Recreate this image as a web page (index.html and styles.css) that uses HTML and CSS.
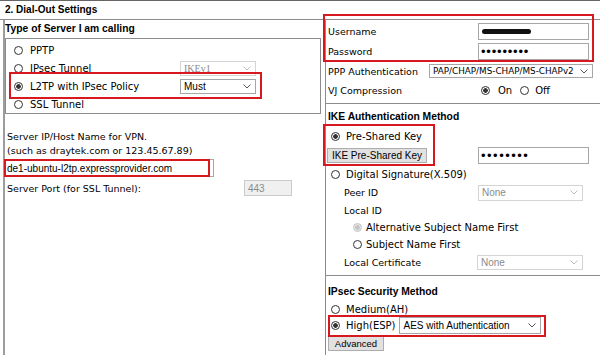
FILE: index.html
```html
<!DOCTYPE html>
<html lang="en">
<head>
  <meta charset="UTF-8">
  <meta name="viewport" content="width=device-width, initial-scale=1.0">
  <title>Dial-Out Settings</title>
  <link rel="stylesheet" href="styles.css">
</head>
<body>
<div class="page">
  <div class="title">2. Dial-Out Settings</div>

  <div class="columns">
    <div class="col-left">
      <div class="head">Type of Server I am calling</div>
      <div class="server-box">
        <div class="opt">
          <input type="radio" class="radio" name="srv">
          <span class="opt-label">PPTP</span>
        </div>
        <div class="opt">
          <input type="radio" class="radio" name="srv">
          <span class="opt-label">IPsec Tunnel</span>
          <span class="select off serif w76">IKEv1<svg viewBox="0 0 8 5"><path d="M0.5 0.5 L4 4 L7.5 0.5"/></svg></span>
        </div>
        <div class="opt">
          <input type="radio" class="radio" name="srv" checked>
          <span class="opt-label">L2TP with IPsec Policy</span>
          <span class="select w76">Must<svg viewBox="0 0 8 5"><path d="M0.5 0.5 L4 4 L7.5 0.5"/></svg></span>
        </div>
        <div class="opt">
          <input type="radio" class="radio" name="srv">
          <span class="opt-label">SSL Tunnel</span>
        </div>
      </div>

      <div class="host">
        <p>Server IP/Host Name for VPN.<br>(such as draytek.com or 123.45.67.89)</p>
        <div class="field host-field">de1-ubuntu-l2tp.expressprovider.com</div>
        <div class="port-row">
          <span class="port-label">Server Port (for SSL Tunnel):</span>
          <span class="field port off">443</span>
        </div>
      </div>
    </div>

    <div class="col-right">
      <div class="section account">
        <div class="row">
          <span class="lbl">Username</span>
          <span class="field user"><span class="redact"></span></span>
        </div>
        <div class="row">
          <span class="lbl">Password</span>
          <span class="field user"><span class="dots">•••••••••</span></span>
        </div>
        <div class="row">
          <span class="lbl ppp-lbl">PPP Authentication</span>
          <span class="select ppp">PAP/CHAP/MS-CHAP/MS-CHAPv2<svg viewBox="0 0 8 5"><path d="M0.5 0.5 L4 4 L7.5 0.5"/></svg></span>
        </div>
        <div class="row vj">
          <span class="lbl vj-lbl">VJ Compression</span>
          <input type="radio" class="radio" name="vj" checked>
          <span class="vj-on">On</span>
          <input type="radio" class="radio" name="vj">
          <span class="vj-off">Off</span>
        </div>
      </div>

      <div class="section ike">
        <div class="head">IKE Authentication Method</div>
        <div class="row h20 choice">
          <input type="radio" class="radio" name="ike" checked>
          <span>Pre-Shared Key</span>
        </div>
        <div class="row h19">
          <span class="lbl"><button class="btn psk-btn">IKE Pre-Shared Key</button></span>
          <span class="field user"><span class="dots wide">••••••••</span></span>
        </div>
        <div class="row h19 choice">
          <input type="radio" class="radio" name="ike">
          <span>Digital Signature(X.509)</span>
        </div>
        <div class="row h17 sub">
          <span class="lbl sub-lbl">Peer ID</span>
          <span class="select off w105">None<svg viewBox="0 0 8 5"><path d="M0.5 0.5 L4 4 L7.5 0.5"/></svg></span>
        </div>
        <div class="row h18 sub">Local ID</div>
        <div class="row h16 subsub">
          <input type="radio" class="radio dis" name="lid" checked disabled>
          <span>Alternative Subject Name First</span>
        </div>
        <div class="row h18 subsub">
          <input type="radio" class="radio" name="lid">
          <span>Subject Name First</span>
        </div>
        <div class="row h18 sub">
          <span class="lbl cert-lbl">Local Certificate</span>
          <span class="select off w106">None<svg viewBox="0 0 8 5"><path d="M0.5 0.5 L4 4 L7.5 0.5"/></svg></span>
        </div>
      </div>

      <div class="section ipsec">
        <div class="head">IPsec Security Method</div>
        <div class="row h16 choice">
          <input type="radio" class="radio" name="sec">
          <span>Medium(AH)</span>
        </div>
        <div class="row h17 choice">
          <input type="radio" class="radio" name="sec" checked>
          <span>High(ESP)</span>
          <span class="select esp">AES with Authentication<svg viewBox="0 0 8 5"><path d="M0.5 0.5 L4 4 L7.5 0.5"/></svg></span>
        </div>
        <div class="adv-row"><button class="btn adv">Advanced</button></div>
      </div>
    </div>
  </div>

  <!-- red highlight frames drawn over the form -->
  <div class="mark mark-l2tp"></div>
  <div class="mark mark-host"></div>
  <div class="mark mark-account"></div>
  <div class="mark mark-psk"></div>
  <div class="mark mark-esp"></div>
</div>
</body>
</html>
```

FILE: styles.css
```css
body {
  margin: 0;
  font-family: "DejaVu Sans", Verdana, sans-serif;
  font-size: 9.5px;
  color: #000;
  background: #fff;
}
.page {
  position: relative;
  width: 600px;
  height: 355px;
  overflow: hidden;
}
.title {
  height: 18px;
  line-height: 18px;
  padding-left: 5px;
  border-top: 1px solid #666;
  border-bottom: 1px solid #8c8c8c;
  font-family: "Liberation Sans", Arial, sans-serif;
  font-weight: bold;
  font-size: 10px;
}
.head {
  height: 18px;
  line-height: 18px;
  font-family: "Liberation Sans", Arial, sans-serif;
  font-weight: bold;
  font-size: 10.3px;
}
.columns {
  display: flex;
  height: 335px;
}
.col-left {
  width: 320px;
  margin-left: 3px;
  border-left: 2px solid #9d9d9d;
}
.col-right {
  flex: 1;
  border-left: 1px solid #8c8c8c;
}

/* radios */
.radio {
  appearance: none;
  box-sizing: border-box;
  width: 9px;
  height: 9px;
  margin: 0;
  border: 1px solid #333;
  border-radius: 50%;
  background: #fff;
  flex: none;
}
.radio:checked {
  background: radial-gradient(circle, #333 0 2px, #fff 2.6px);
}
.radio.dis {
  border-color: #c4c4c4;
  background: radial-gradient(circle, #c4c4c4 0 2px, #e6e6e6 2.6px);
}

/* selects and fields */
.select {
  display: flex;
  align-items: center;
  justify-content: space-between;
  box-sizing: border-box;
  height: 15px;
  padding: 0 4px 0 3px;
  border: 1px solid #a6a6a6;
  background: #fff;
  font-family: "Liberation Sans", Arial, sans-serif;
  font-size: 10px;
  color: #000;
}
.select svg {
  width: 8px;
  height: 5px;
  flex: none;
  fill: none;
  stroke: #555;
  stroke-width: 1;
}
.select.off {
  color: #8a8a8a;
  border-color: #d4d4d4;
}
.select.off svg {
  stroke: #bdbdbd;
}
.select.serif {
  font-family: "Liberation Serif", "Times New Roman", serif;
}
.w76 { width: 76px; }
.w105 { width: 105px; height: 16px; }
.w106 { width: 106px; }

.field {
  display: flex;
  align-items: center;
  box-sizing: border-box;
  height: 18px;
  padding-left: 1px;
  border: 1px solid #a6a6a6;
  background: #fff;
  font-family: "Liberation Sans", Arial, sans-serif;
  font-size: 10px;
}
.field.off {
  background: #f0f0f0;
  border-color: #cacaca;
  color: #8a8a8a;
}

/* left column */
.server-box {
  margin-right: 4px;
  padding-top: 2px;
  border: 1px solid #8c8c8c;
}
.opt {
  display: flex;
  align-items: center;
  height: 18px;
  padding-left: 8px;
  font-size: 10px;
}
.opt .radio {
  margin-right: 7px;
}
.opt-label {
  width: 150px;
}
.host p {
  margin: 16px 0 0;
  padding-left: 2px;
  line-height: 14px;
}
.host-field {
  width: 209px;
  margin-top: 1px;
}
.port-row {
  display: flex;
  align-items: center;
  height: 18px;
  margin-top: 2px;
  padding-left: 2px;
}
.port-label {
  width: 237px;
}
.field.port {
  width: 48px;
  height: 16px;
  padding-left: 3px;
}

/* right column */
.section {
  padding-left: 2px;
  border-bottom: 1px solid #8c8c8c;
}
.account {
  padding-top: 1px;
  padding-bottom: 4px;
}
.ike {
  padding-top: 4px;
  padding-bottom: 4px;
}
.ipsec {
  padding-top: 7px;
  border-bottom: none;
}
.row {
  display: flex;
  align-items: center;
  height: 20px;
}
.row .lbl {
  width: 150px;
  flex: none;
}
.h16 { height: 16px; }
.h17 { height: 17px; }
.h18 { height: 18px; }
.h19 { height: 19px; }
.h20 { height: 20px; }

.field.user {
  width: 111px;
  height: 17px;
  padding-left: 2px;
}
.redact {
  width: 49px;
  height: 5px;
  margin-left: 1px;
  border-radius: 3px;
  background: #111;
}
.dots {
  font-family: "Liberation Sans", Arial, sans-serif;
  font-size: 13px;
  letter-spacing: 0.8px;
  line-height: 1;
}
.dots.wide {
  letter-spacing: 1.5px;
}
.row .ppp-lbl {
  width: 101px;
}
.select.ppp {
  width: 164px;
  height: 14px;
  padding-left: 3px;
  font-family: "DejaVu Sans", Verdana, sans-serif;
  font-size: 8.8px;
}
.vj {
  height: 18px;
}
.row .vj-lbl {
  width: 153px;
}
.vj-on {
  margin-left: 8px;
  font-size: 10px;
}
.vj-off {
  margin-left: 6px;
  font-size: 10px;
}
.vj-on + .radio {
  margin-left: 8px;
}

.choice {
  padding-left: 3px;
  font-size: 10px;
}
.choice .radio {
  margin-right: 6px;
}
.sub {
  padding-left: 16px;
}
.row .sub-lbl {
  width: 134px;
}
.row .cert-lbl {
  width: 133px;
}
.subsub {
  padding-left: 25px;
  font-size: 10px;
}
.subsub .radio {
  margin-right: 4px;
}

.btn {
  box-sizing: border-box;
  height: 15px;
  padding: 0;
  border: 1px solid #adadad;
  background: #e1e1e1;
  font-family: "Liberation Sans", Arial, sans-serif;
  font-size: 10px;
  color: #000;
}
.psk-btn {
  width: 100px;
  margin-left: -1px;
}
.select.esp {
  width: 142px;
  height: 17px;
  margin-left: 4px;
}
.adv-row {
  margin-top: 2px;
}
.btn.adv {
  width: 56px;
  font-size: 9.5px;
}

/* red highlight frames */
.mark {
  position: absolute;
  box-sizing: border-box;
  border: 2px solid #d7191f;
}
.mark-l2tp { left: 9px; top: 72px; width: 253px; height: 27px; }
.mark-host { left: 4px; top: 159px; width: 206px; height: 18px; }
.mark-account { left: 323px; top: 14px; width: 271px; height: 48px; }
.mark-psk { left: 323px; top: 124px; width: 112px; height: 42px; }
.mark-esp { left: 328px; top: 315px; width: 218px; height: 22px; }
```
